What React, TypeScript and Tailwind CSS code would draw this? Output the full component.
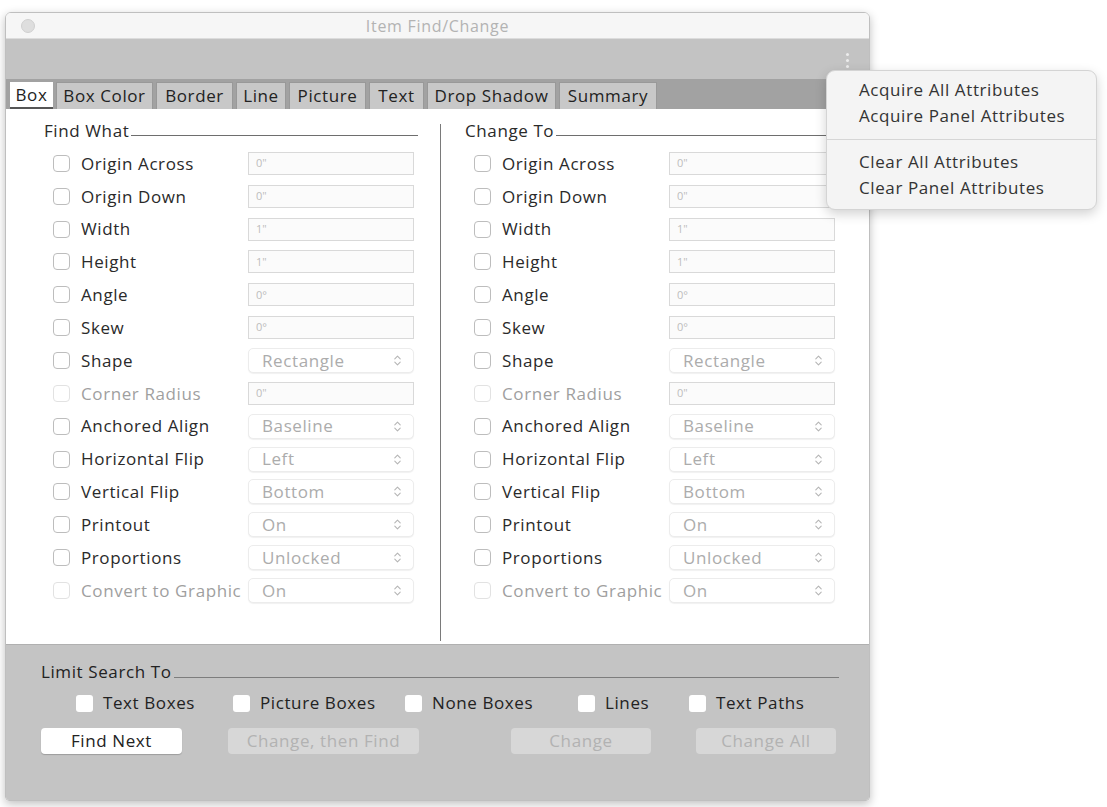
import { ChevronsUpDown } from "lucide-react";

type Row = { label: string; value: string; kind: "field" | "select"; disabled?: boolean };

const ROWS: Row[] = [
  { label: "Origin Across", value: "0\"", kind: "field" },
  { label: "Origin Down", value: "0\"", kind: "field" },
  { label: "Width", value: "1\"", kind: "field" },
  { label: "Height", value: "1\"", kind: "field" },
  { label: "Angle", value: "0°", kind: "field" },
  { label: "Skew", value: "0°", kind: "field" },
  { label: "Shape", value: "Rectangle", kind: "select" },
  { label: "Corner Radius", value: "0\"", kind: "field", disabled: true },
  { label: "Anchored Align", value: "Baseline", kind: "select" },
  { label: "Horizontal Flip", value: "Left", kind: "select" },
  { label: "Vertical Flip", value: "Bottom", kind: "select" },
  { label: "Printout", value: "On", kind: "select" },
  { label: "Proportions", value: "Unlocked", kind: "select" },
  { label: "Convert to Graphic", value: "On", kind: "select", disabled: true },
];

const TABS = [
  { name: "Box", w: "w-[43px]" },
  { name: "Box Color", w: "w-[97px]" },
  { name: "Border", w: "w-[77px]" },
  { name: "Line", w: "w-[50px]" },
  { name: "Picture", w: "w-[77px]" },
  { name: "Text", w: "w-[55px]" },
  { name: "Drop Shadow", w: "w-[129px]" },
  { name: "Summary", w: "w-[98px]" },
];

const LIMITS = [
  { name: "Text Boxes", w: "w-[157px]" },
  { name: "Picture Boxes", w: "w-[172px]" },
  { name: "None Boxes", w: "w-[173px]" },
  { name: "Lines", w: "w-[111px]" },
  { name: "Text Paths", w: "w-[130px]" },
];

function Check({ disabled }: { disabled?: boolean }) {
  return (
    <span
      className={`w-[17px] h-[17px] rounded-[4px] border bg-white shrink-0 ${
        disabled ? "border-[#e2e2e2]" : "border-[#bdbdbd]"
      }`}
    />
  );
}

function Column({ title }: { title: string }) {
  return (
    <div className="flex flex-col flex-1">
      <div className="flex items-end h-[20px] mb-[6px]">
        <span className="leading-[20px] text-[#2a2a2a]">{title}</span>
        <span className="flex-1 border-b border-[#6e6e6e] mb-[5px] ml-[2px] mr-[22px]" />
      </div>
      {ROWS.map((r) => (
        <div key={r.label} className="flex items-center h-[32.85px]">
          <div className="w-[204px] flex items-center pl-[9px] shrink-0">
            <Check disabled={r.disabled} />
            <span
              className={`ml-[11px] whitespace-nowrap ${
                r.disabled ? "text-[#9f9f9f]" : "text-[#2a2a2a]"
              }`}
            >
              {r.label}
            </span>
          </div>
          {r.kind === "field" ? (
            <div className="w-[166px] h-[23px] border border-[#d9d9d9] bg-[#fbfbfb] flex items-center pl-[7px] text-[11px] tracking-normal text-[#bdbdbd]">
              {r.value}
            </div>
          ) : (
            <div className="w-[166px] h-[25px] rounded-[5px] border border-[#ececec] bg-white shadow-[0_1px_1px_rgba(0,0,0,0.06)] flex items-center pl-[13px] pr-[9px] text-[#acacac]">
              <span className="flex-1">{r.value}</span>
              <ChevronsUpDown size={13} strokeWidth={2} className="text-[#b5b5b5]" />
            </div>
          )}
        </div>
      ))}
    </div>
  );
}

export default function App() {
  return (
    <div className="relative min-h-[807px] bg-white font-['Open_Sans',sans-serif] text-[17px] tracking-[0.6px] pt-[12px] pl-[5px]">
      <div className="w-[865px] h-[789px] flex flex-col rounded-t-[6px] rounded-b-[4px] border border-[#bfbfbf] shadow-[0_3px_10px_rgba(0,0,0,0.25)] overflow-hidden">
        {/* title bar */}
        <div className="relative h-[26px] bg-[#f6f6f6] border-b border-[#dcdcdc] flex items-center justify-center shrink-0">
          <span className="absolute left-[15px] top-[6px] w-[14px] h-[14px] rounded-full bg-[#dedede] border border-[#d0d0d0]" />
          <span className="text-[16px] tracking-[0.7px] text-[#b3b3b3]">Item Find/Change</span>
        </div>

        {/* toolbar */}
        <div className="h-[40px] bg-[#c3c3c3] flex items-center justify-end pr-[20px] shrink-0">
          <div className="flex flex-col gap-[3px] pt-[2px]">
            <span className="w-[3px] h-[3px] rounded-full bg-[#ececec]" />
            <span className="w-[3px] h-[3px] rounded-full bg-[#ececec]" />
            <span className="w-[3px] h-[3px] rounded-full bg-[#ececec]" />
          </div>
        </div>

        {/* tab strip */}
        <div className="h-[30px] bg-[#a2a2a2] flex items-end gap-[3px] pl-[4px] shrink-0">
          {TABS.map((t, i) => (
            <div
              key={t.name}
              className={`${t.w} h-[27px] flex items-center justify-center text-[#222] ${
                i === 0
                  ? "bg-white border-b-2 border-[#555]"
                  : "bg-[#c8c8c8] border border-b-0 border-[#999]"
              }`}
            >
              {t.name}
            </div>
          ))}
        </div>

        {/* main panel */}
        <div className="h-[535px] bg-white flex pt-[12px] shrink-0">
          <div className="w-[434px] pl-[38px] flex">
            <Column title="Find What" />
          </div>
          <div className="w-px bg-[#7a7a7a] mt-[3px] mb-[3px]" />
          <div className="flex-1 pl-[24px] flex">
            <Column title="Change To" />
          </div>
        </div>

        {/* limit search + buttons */}
        <div className="flex-1 bg-[#c4c4c4] border-t border-[#b0b0b0] pl-[35px] pt-[17px]">
          <div className="flex items-end h-[20px] mr-[30px]">
            <span className="leading-[20px] text-[#222]">Limit Search To</span>
            <span className="flex-1 border-b border-[#7d7d7d] mb-[4px] ml-[2px]" />
          </div>
          <div className="flex items-center h-[34px] pl-[35px] mt-[4px]">
            {LIMITS.map((l) => (
              <div key={l.name} className={`${l.w} flex items-center`}>
                <span className="w-[17px] h-[17px] rounded-[3px] bg-white shrink-0" />
                <span className="ml-[10px] text-[#222] whitespace-nowrap">{l.name}</span>
              </div>
            ))}
          </div>
          <div className="flex items-center h-[26px] mt-[8px]">
            <div className="w-[141px] h-[26px] rounded-[4px] bg-white shadow-[0_1px_1px_rgba(0,0,0,0.2)] flex items-center justify-center text-[#222]">
              Find Next
            </div>
            <div className="ml-[46px] w-[191px] h-[26px] rounded-[4px] bg-[#d7d7d7] flex items-center justify-center text-[#b2b2b2]">
              Change, then Find
            </div>
            <div className="ml-[92px] w-[140px] h-[26px] rounded-[4px] bg-[#d7d7d7] flex items-center justify-center text-[#b2b2b2]">
              Change
            </div>
            <div className="ml-[45px] w-[140px] h-[26px] rounded-[4px] bg-[#d7d7d7] flex items-center justify-center text-[#b2b2b2]">
              Change All
            </div>
          </div>
        </div>
      </div>

      {/* attributes menu */}
      <div className="absolute left-[826px] top-[70px] w-[271px] h-[140px] rounded-[9px] bg-[#f4f4f4] border border-[#d4d4d4] shadow-[0_4px_12px_rgba(0,0,0,0.18)] pt-[6px] text-[#333]">
        <div className="pl-[32px] h-[26px] flex items-center">Acquire All Attributes</div>
        <div className="pl-[32px] h-[26px] flex items-center">Acquire Panel Attributes</div>
        <div className="mt-[10px] mb-[9px] border-t border-[#d6d6d6]" />
        <div className="pl-[32px] h-[26px] flex items-center">Clear All Attributes</div>
        <div className="pl-[32px] h-[26px] flex items-center">Clear Panel Attributes</div>
      </div>
    </div>
  );
}
